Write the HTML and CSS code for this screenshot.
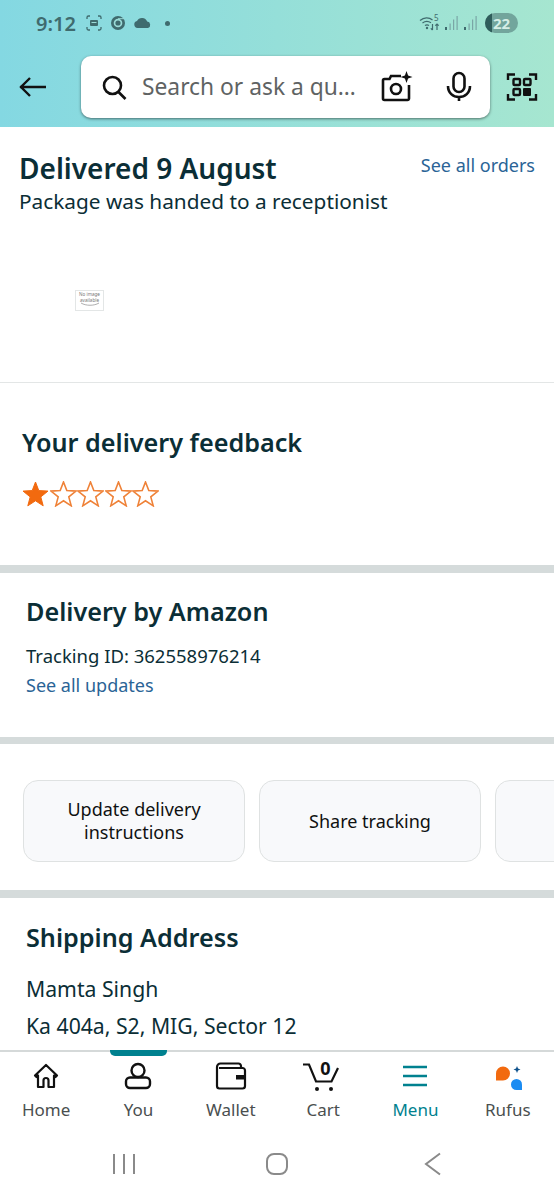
FILE: index.html
```html
<!DOCTYPE html>
<html lang="en">
<head>
    <meta charset="UTF-8">
    <meta name="viewport" content="width=device-width, initial-scale=1.0">
    <title>Your order</title>
    <link rel="stylesheet" href="styles.css">
</head>
<body>
    <header class="top">
        <div class="status">
            <div class="status-left">
                <span class="time">9:12</span>
                <svg class="st-icon" width="18" height="18" viewBox="0 0 18 18" fill="none" stroke="#3f6b6e" stroke-width="1.3"><path d="M2 5V3.5A1.5 1.5 0 0 1 3.5 2H5M13 2h1.5A1.5 1.5 0 0 1 16 3.5V5M16 13v1.500A1.500 1.500 0 0 1 14.500 16H13M5 16H3.500A1.500 1.500 0 0 1 2 14.500V13"/><rect x="5" y="6" width="8" height="6" rx="1" fill="#3f6b6e" stroke="none"/><rect x="6.500" y="8" width="5" height="1" fill="#9bdcd8" stroke="none"/></svg>
                <svg class="st-icon" width="16" height="16" viewBox="0 0 16 16"><circle cx="8" cy="8" r="7" fill="#3f6b6e"/><circle cx="8" cy="8" r="4.300" fill="#9bdcd8"/><circle cx="8" cy="8" r="2.600" fill="#3f6b6e"/><path d="M8 3.700h6.200" stroke="#9bdcd8" stroke-width="1"/></svg>
                <svg class="st-icon" width="19" height="12" viewBox="0 0 19 12"><path d="M4.500 11A3.500 3.500 0 0 1 4 4.100 5.500 5.500 0 0 1 14.200 4.600 3.300 3.300 0 0 1 15 11z" fill="#3f6b6e"/></svg>
                <span class="dot"></span>
            </div>
            <div class="status-right">
                <svg width="22" height="18" viewBox="0 0 22 18" fill="none" stroke="#3f6b6e" stroke-width="1.200"><path d="M1 6.500C5 3 10 3 13.500 6M3.500 9C6.500 6.800 9 6.800 12 8.800M6 11.500C7.500 10.500 8.500 10.500 10 11.500"/><circle cx="8" cy="14" r="1.200" fill="#3f6b6e" stroke="none"/><path d="M13.500 10v6M11.800 14.300l1.700 1.700M18 16v-6M16.300 11.700l1.700-1.700 1.700 1.700"/></svg>
                <span class="wifi-num">5</span>
                <svg class="bars" width="16" height="16" viewBox="0 0 16 16"><rect x="1" y="12" width="2" height="3" fill="#3f6b6e"/><rect x="5.500" y="8.500" width="1.200" height="6.500" fill="#7aa6a6"/><rect x="9" y="4.500" width="1.200" height="10.500" fill="#7aa6a6"/><rect x="12.500" y="1" width="1.200" height="14" fill="#7aa6a6"/></svg>
                <svg class="bars" width="16" height="16" viewBox="0 0 16 16"><rect x="1" y="12" width="2" height="3" fill="#3f6b6e"/><rect x="5.500" y="8.500" width="1.200" height="6.500" fill="#7aa6a6"/><rect x="9" y="4.500" width="1.200" height="10.500" fill="#7aa6a6"/><rect x="12.500" y="1" width="1.200" height="14" fill="#7aa6a6"/></svg>
                <span class="battery"><span class="battery-fill"></span><span class="battery-num">22</span></span>
            </div>
        </div>
        <div class="searchbar">
            <svg class="back" width="30" height="24" viewBox="0 0 30 24" fill="none" stroke="#111" stroke-width="2.400"><path d="M29 12H3M13 3l-9 9 9 9"/></svg>
            <div class="search-box">
                <svg width="26" height="26" viewBox="0 0 26 26" fill="none" stroke="#111" stroke-width="2.600"><circle cx="11.500" cy="11.500" r="8.500"/><path d="M17.500 18l7 7"/></svg>
                <span class="search-text">Search or ask a qu…</span>
                <svg class="cam" width="32" height="32" viewBox="0 0 32 32" fill="none" stroke="#111" stroke-width="2.600"><path d="M20 5H10L8.500 8H3.500A1.500 1.500 0 0 0 2 9.500v18A1.500 1.500 0 0 0 3.500 29h23a1.500 1.500 0 0 0 1.500-1.500V14"/><circle cx="15" cy="18" r="5"/><path d="M25.500 0l1.600 4.400 4.400 1.600-4.400 1.600-1.600 4.400-1.600-4.400L19.500 6l4.400-1.600z" fill="#111" stroke="none"/></svg>
                <svg class="mic" width="26" height="32" viewBox="0 0 26 32" fill="none" stroke="#111" stroke-width="2.600"><rect x="7.500" y="2" width="11" height="19" rx="5.500"/><path d="M2 15c0 7 5 11 11 11s11-4 11-11M13 26v4"/></svg>
            </div>
            <svg class="scan" width="32" height="30" viewBox="0 0 32 30" fill="none" stroke="#111" stroke-width="2.400"><path d="M2 8V2.500h7M23 2.500h7V8M30 22v5.500h-7M9 27.500H2V22"/><rect x="7.500" y="7" width="6.500" height="6" rx="1"/><rect x="18" y="7" width="6.500" height="6" rx="1"/><rect x="7.500" y="17" width="6.500" height="6" rx="1"/><rect x="17" y="16" width="8" height="8" rx="1" fill="#111" stroke="none"/></svg>
        </div>
    </header>

    <main class="content">
        <section class="delivered">
            <div class="delivered-head">
                <h1>Delivered 9 August</h1>
                <a class="link orders-link" href="#">See all orders</a>
            </div>
            <p class="delivered-note">Package was handed to a receptionist</p>
            <div class="no-image">
                <span>No image<br>available</span>
                <svg width="20" height="4" viewBox="0 0 20 4" fill="none" stroke="#999" stroke-width="0.800"><path d="M1 1c5 3 13 3 18 0"/></svg>
            </div>
        </section>

        <section class="feedback">
            <h2>Your delivery feedback</h2>
            <div class="stars">
                <svg width="27" height="26" viewBox="0 0 27 26"><path d="M13.500 1l3.300 8.600 9.200.5-7.200 5.800 2.400 8.900-7.700-5-7.700 5 2.400-8.900L1 10.100l9.200-.5z" fill="#f26a0f" stroke="#f26a0f"/></svg>
                <svg width="27" height="26" viewBox="0 0 27 26"><path d="M13.500 1l3.300 8.600 9.200.5-7.200 5.800 2.400 8.900-7.700-5-7.700 5 2.400-8.900L1 10.100l9.200-.5z" fill="none" stroke="#ef8238" stroke-width="1.600"/></svg>
                <svg width="27" height="26" viewBox="0 0 27 26"><path d="M13.500 1l3.300 8.600 9.200.5-7.200 5.800 2.400 8.900-7.700-5-7.700 5 2.400-8.900L1 10.100l9.200-.5z" fill="none" stroke="#ef8238" stroke-width="1.600"/></svg>
                <svg width="27" height="26" viewBox="0 0 27 26"><path d="M13.500 1l3.300 8.600 9.200.5-7.200 5.800 2.400 8.900-7.700-5-7.700 5 2.400-8.900L1 10.100l9.200-.5z" fill="none" stroke="#ef8238" stroke-width="1.600"/></svg>
                <svg width="27" height="26" viewBox="0 0 27 26"><path d="M13.500 1l3.300 8.600 9.200.5-7.200 5.800 2.400 8.900-7.700-5-7.700 5 2.400-8.900L1 10.100l9.200-.5z" fill="none" stroke="#ef8238" stroke-width="1.600"/></svg>
            </div>
        </section>

        <section class="tracking">
            <h2>Delivery by Amazon</h2>
            <p class="tracking-id">Tracking ID: 362558976214</p>
            <a class="link" href="#">See all updates</a>
        </section>

        <section class="actions">
            <div class="action">Update delivery instructions</div>
            <div class="action">Share tracking</div>
            <div class="action"></div>
        </section>

        <section class="shipping">
            <h2>Shipping Address</h2>
            <p>Mamta Singh</p>
            <p>Ka 404a, S2, MIG, Sector 12</p>
        </section>
    </main>

    <nav class="tabs">
        <a class="tab" href="#">
            <svg width="28" height="28" viewBox="0 0 28 28" fill="none" stroke="#111" stroke-width="2.200" stroke-linejoin="round"><path d="M14 3L3 13.500l1.500 1.500L6 13.500V25h5.500v-6.500a2.500 2.500 0 0 1 5 0V25H22V13.500l1.500 1.500L25 13.500z"/></svg>
            Home
        </a>
        <a class="tab active-top" href="#">
            <svg width="28" height="28" viewBox="0 0 28 28" fill="none" stroke="#111" stroke-width="2.400"><circle cx="14" cy="8.500" r="6.500"/><rect x="2" y="15.500" width="24" height="10.500" rx="4"/></svg>
            You
        </a>
        <a class="tab" href="#">
            <svg width="32" height="28" viewBox="0 0 32 28" fill="none" stroke="#111" stroke-width="2.200"><path d="M26 6V4a2.500 2.500 0 0 0-2.500-2.500H5.500A3.500 3.500 0 0 0 2 5v19a2.500 2.500 0 0 0 2.500 2.500h23A2.500 2.500 0 0 0 30 24V8.500A2.500 2.500 0 0 0 27.500 6H4"/><rect x="21" y="13" width="9" height="4.500" fill="#111" stroke="none"/></svg>
            Wallet
        </a>
        <a class="tab" href="#">
            <span class="cart-icon">
                <svg width="38" height="30" viewBox="0 0 38 30" fill="none" stroke="#111" stroke-width="2.200"><path d="M1 2.500h6l7 17h15.500L36 6"/><circle cx="15" cy="27" r="2" fill="#111" stroke="none"/><circle cx="29" cy="27" r="2" fill="#111" stroke="none"/></svg>
                <span class="cart-count">0</span>
            </span>
            Cart
        </a>
        <a class="tab tab-on" href="#">
            <svg width="28" height="28" viewBox="0 0 28 28" fill="none" stroke="#00818f" stroke-width="2.400"><path d="M2 5h24M2 14h24M2 23h24"/></svg>
            Menu
        </a>
        <a class="tab" href="#">
            <svg width="28" height="28" viewBox="0 0 28 28"><path d="M2 11.500A7 7 0 1 1 9 18.500H2z" fill="#f26a0f"/><path d="M28 22.500a5.500 5.500 0 1 0-5.500 5.500H28z" fill="#1b8cf2"/><path d="M23 4l1 2.500 2.500 1-2.500 1-1 2.500-1-2.500-2.500-1 2.500-1z" fill="#0b4f8a"/></svg>
            Rufus
        </a>
    </nav>

    <div class="softkeys">
        <svg width="24" height="24" viewBox="0 0 24 24" fill="none" stroke="#8a8a8a" stroke-width="2"><path d="M2 2v20M12 2v20M22 2v20"/></svg>
        <svg class="key-home" width="24" height="24" viewBox="0 0 24 24" fill="none" stroke="#8a8a8a" stroke-width="2"><rect x="2" y="2" width="20" height="20" rx="7"/></svg>
        <svg width="18" height="24" viewBox="0 0 18 24" fill="none" stroke="#8a8a8a" stroke-width="2"><path d="M16 1.500L2 12l14 10.500"/></svg>
    </div>
</body>
</html>
```
FILE: styles.css
```css
/* Page */
* {
    box-sizing: border-box;
}

html, body {
    margin: 0;
    padding: 0;
}

body {
    width: 554px;
    height: 1200px;
    display: flex;
    flex-direction: column;
    overflow: hidden;
    background-color: #fff;
    color: #0f1111;
    font-family: "Noto Sans", "Open Sans", sans-serif;
}

h1, h2, p {
    margin: 0;
}

h1, h2 {
    color: #0b2e36;
    font-weight: 600;
}

.link {
    color: #2a6496;
    text-decoration: none;
    font-size: 18px;
}

/* Header */
.top {
    height: 127px;
    flex: none;
    background: linear-gradient(90deg, #84d8e2, #a6e6d0);
}

.status {
    height: 56px;
    display: flex;
    justify-content: space-between;
    padding: 12px 36px 0 36px;
}

.status-left, .status-right {
    height: 22px;
    display: flex;
    align-items: center;
}

.time {
    color: #3f6b6e;
    font-size: 20px;
    font-weight: 600;
    margin-right: 9px;
}

.st-icon {
    margin-right: 7px;
}

.dot {
    width: 5px;
    height: 5px;
    margin-left: 6px;
    border-radius: 50%;
    background-color: #3f6b6e;
}

.wifi-num {
    color: #3f6b6e;
    font-size: 8px;
    margin: -12px 0 0 -7px;
    width: 7px;
}

.bars {
    margin-left: 3px;
}

.battery {
    width: 33px;
    height: 20px;
    margin-left: 6px;
    border-radius: 10px;
    background-color: #72a59c;
    display: flex;
    align-items: center;
    justify-content: center;
    overflow: hidden;
    position: relative;
}

.battery-fill {
    position: absolute;
    left: 0;
    top: 0;
    bottom: 0;
    width: 7px;
    background-color: #2f5d5b;
}

.battery-num {
    position: relative;
    color: #d5eee6;
    font-size: 15px;
    font-weight: 700;
}

.searchbar {
    display: flex;
    align-items: center;
    height: 62px;
}

.back {
    margin-left: 17px;
    flex: none;
}

.search-box {
    width: 409px;
    height: 62px;
    margin-left: 34px;
    flex: none;
    display: flex;
    align-items: center;
    padding: 0 18px 0 20px;
    background-color: #fff;
    border-radius: 10px;
    box-shadow: 0 1px 3px rgba(0, 0, 0, 0.5);
}

.search-text {
    flex: 1;
    margin-left: 15px;
    margin-top: -2px;
    color: #5f6363;
    font-size: 22.8px;
    white-space: nowrap;
}

.cam {
    margin-right: 3px;
}

.mic {
    margin-left: 30px;
}

.scan {
    margin-left: 16px;
    flex: none;
}

/* Sections */
.content {
    flex: 1;
    min-height: 0;
    overflow: hidden;
}

.delivered {
    height: 256px;
    padding: 22px 19px 0 19px;
    border-bottom: 1px solid #e3e6e6;
}

.delivered-head {
    display: flex;
    justify-content: space-between;
    align-items: flex-start;
}

.delivered-head h1 {
    font-size: 28px;
    line-height: 38px;
}

.orders-link {
    line-height: 32px;
}

.delivered-note {
    font-size: 20.8px;
    line-height: 28px;
    color: #0b2e36;
}

.no-image {
    width: 29px;
    height: 21px;
    margin: 75px 0 0 56px;
    border: 1px solid #e3e6e6;
    text-align: center;
    color: #777;
    font-size: 5px;
    line-height: 6px;
    overflow: hidden;
}

.no-image span {
    display: block;
    white-space: nowrap;
    font-size: 4.6px;
}

.no-image svg {
    display: block;
    margin: -1px auto 0 auto;
}

.feedback {
    height: 182px;
    padding: 41px 22px 0 22px;
}

.feedback h2 {
    font-size: 25.2px;
    line-height: 36px;
}

.stars {
    display: flex;
    margin-top: 21px;
}

.stars svg {
    margin-right: 0.5px;
}

.tracking {
    height: 179px;
    padding: 20px 26px 0 26px;
    border-top: 8px solid #d5dbdb;
    border-bottom: 7px solid #d5dbdb;
}

.tracking h2, .shipping h2 {
    font-size: 25.2px;
    line-height: 36px;
}

.tracking-id {
    margin-top: 13px;
    font-size: 18.5px;
    line-height: 28px;
    color: #0b2e36;
}

.tracking .link {
    display: block;
    line-height: 30px;
}

.actions {
    height: 154px;
    display: flex;
    gap: 14px;
    padding: 36px 0 0 23px;
    border-bottom: 8px solid #d5dbdb;
    overflow: hidden;
}

.action {
    width: 222px;
    height: 82px;
    flex: none;
    display: flex;
    align-items: center;
    justify-content: center;
    padding: 0 24px;
    text-align: center;
    background-color: #f8f9fb;
    border: 1px solid #dfe2e2;
    border-radius: 15px;
    font-size: 18px;
    line-height: 23px;
}

.shipping {
    padding: 21px 26px 0 26px;
}

.shipping p {
    font-size: 21.2px;
    line-height: 37px;
    color: #0b2e36;
}

.shipping h2 {
    margin-bottom: 15px;
}

/* Bottom tabs */
.tabs {
    height: 90px;
    flex: none;
    display: flex;
    border-top: 2px solid #d5d9d9;
    background-color: #fff;
}

.tab {
    flex: 1;
    display: flex;
    flex-direction: column;
    align-items: center;
    gap: 8px;
    padding-top: 10px;
    position: relative;
    color: #4a4f4f;
    font-size: 17px;
    line-height: 24px;
    text-decoration: none;
}

.tab svg {
    display: block;
}

.active-top::before {
    content: "";
    position: absolute;
    top: -2px;
    left: 18px;
    right: 18px;
    height: 6px;
    background-color: #00818f;
    border-radius: 0 0 5px 5px;
}

.tab-on {
    color: #00818f;
}

.cart-icon {
    position: relative;
    height: 28px;
    left: -2px;
}

.cart-count {
    position: absolute;
    top: -6px;
    left: 18px;
    color: #111;
    font-size: 18px;
    font-weight: 700;
    line-height: 24px;
}

/* Android keys */
.softkeys {
    height: 60px;
    flex: none;
    display: flex;
    align-items: flex-start;
    justify-content: space-between;
    padding: 12px 112px 0 112px;
}

.key-home {
    margin-right: 6px;
}
```
